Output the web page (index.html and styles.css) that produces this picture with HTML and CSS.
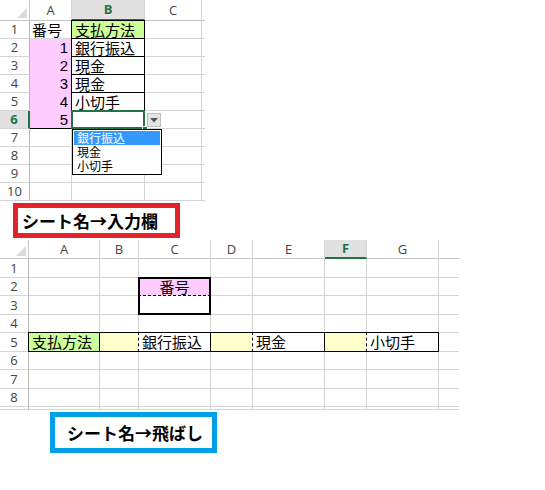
FILE: index.html
```html
<!DOCTYPE html>
<html lang="ja">
<head>
<meta charset="utf-8">
<title>シート</title>
<link rel="stylesheet" href="styles.css">
</head>
<body>
<main class="page">
  <section class="sheet sheet-top">
    <div class="h corner"><span class="tri"></span></div>
    <div class="h">A</div>
    <div class="h sel">B</div>
    <div class="h">C</div>
    <div class="h edge"></div>

    <div class="r">1</div>
    <div class="c">番号</div>
    <div class="c bx green">支払方法</div>
    <div class="c"></div>
    <div class="c edge"></div>

    <div class="r">2</div>
    <div class="c pk num">1</div>
    <div class="c bx">銀行振込</div>
    <div class="c"></div>
    <div class="c edge"></div>

    <div class="r">3</div>
    <div class="c pk num">2</div>
    <div class="c bx">現金</div>
    <div class="c"></div>
    <div class="c edge"></div>

    <div class="r">4</div>
    <div class="c pk num">3</div>
    <div class="c bx">現金</div>
    <div class="c"></div>
    <div class="c edge"></div>

    <div class="r">5</div>
    <div class="c pk num">4</div>
    <div class="c bx">小切手</div>
    <div class="c"></div>
    <div class="c edge"></div>

    <div class="r sel">6</div>
    <div class="c pk num last">5</div>
    <div class="c selcell">
      <span class="handle"></span>
      <span class="dd-btn"><svg width="8" height="5" viewBox="0 0 8 5"><path d="M0 0h8L4 4.5z" fill="#555"/></svg></span>
      <ul class="dd-list">
        <li class="hl">銀行振込</li>
        <li>現金</li>
        <li>小切手</li>
      </ul>
    </div>
    <div class="c"></div>
    <div class="c edge"></div>

    <div class="r">7</div><div class="c"></div><div class="c"></div><div class="c"></div><div class="c edge"></div>
    <div class="r">8</div><div class="c"></div><div class="c"></div><div class="c"></div><div class="c edge"></div>
    <div class="r">9</div><div class="c"></div><div class="c"></div><div class="c"></div><div class="c edge"></div>
    <div class="r">10</div><div class="c"></div><div class="c"></div><div class="c"></div><div class="c edge"></div>
  </section>

  <div class="label label-red">シート名→入力欄</div>

  <section class="sheet sheet-bottom">
    <div class="h corner"><span class="tri"></span></div>
    <div class="h">A</div>
    <div class="h">B</div>
    <div class="h">C</div>
    <div class="h">D</div>
    <div class="h">E</div>
    <div class="h sel">F</div>
    <div class="h">G</div>
    <div class="h edge"></div>

    <div class="r">1</div><div class="c"></div><div class="c"></div><div class="c"></div><div class="c"></div><div class="c"></div><div class="c"></div><div class="c"></div><div class="c edge"></div>

    <div class="r">2</div><div class="c"></div><div class="c"></div>
    <div class="c nbox-top">番号</div>
    <div class="c"></div><div class="c"></div><div class="c"></div><div class="c"></div><div class="c edge"></div>

    <div class="r">3</div><div class="c"></div><div class="c"></div>
    <div class="c nbox-bot"></div>
    <div class="c"></div><div class="c"></div><div class="c"></div><div class="c"></div><div class="c edge"></div>

    <div class="r">4</div><div class="c"></div><div class="c"></div><div class="c"></div><div class="c"></div><div class="c"></div><div class="c"></div><div class="c"></div><div class="c edge"></div>

    <div class="r">5</div>
    <div class="c b5 green">支払方法</div>
    <div class="c b5 yellow"></div>
    <div class="c b5 dl">銀行振込</div>
    <div class="c b5 yellow"></div>
    <div class="c b5 dl">現金</div>
    <div class="c b5 yellow"></div>
    <div class="c b5 dl">小切手</div>
    <div class="c edge"></div>

    <div class="r">6</div><div class="c"></div><div class="c"></div><div class="c"></div><div class="c"></div><div class="c"></div><div class="c"></div><div class="c"></div><div class="c edge"></div>
    <div class="r">7</div><div class="c"></div><div class="c"></div><div class="c"></div><div class="c"></div><div class="c"></div><div class="c"></div><div class="c"></div><div class="c edge"></div>
    <div class="r">8</div><div class="c"></div><div class="c"></div><div class="c"></div><div class="c"></div><div class="c"></div><div class="c"></div><div class="c"></div><div class="c edge"></div>
    <div class="r"></div><div class="c"></div><div class="c"></div><div class="c"></div><div class="c"></div><div class="c"></div><div class="c"></div><div class="c"></div><div class="c edge"></div>
  </section>

  <div class="label label-blue">シート名→飛ばし</div>
</main>
</body>
</html>
```

FILE: styles.css
```css
* {
  box-sizing: border-box;
  margin: 0;
  padding: 0;
}

html, body {
  background: #fff;
}

body {
  margin: 0;
  font-family: "Noto Sans CJK JP", "Noto Sans", sans-serif;
  color: #000;
}

.page {
  display: flex;
  flex-direction: column;
  align-items: flex-start;
}

.sheet {
  display: grid;
  overflow: hidden;
}

.sheet-top {
  grid-template-columns: 30px 42px 73px 57px 3px;
  grid-template-rows: 21px repeat(10, 18px);
  width: 205px;
}

.sheet-bottom {
  margin-top: 2px;
  grid-template-columns: 29px 71px 39px 72px 42px 72px 42px 72px 20px;
  grid-template-rows: 19px repeat(4, 19px 18px) 3px;
  width: 459px;
  height: 170px;
}

/* headers */
.h {
  display: flex;
  align-items: center;
  justify-content: center;
  border-right: 1px solid #d4d4d4;
  border-bottom: 1px solid #c4c4c4;
  font-family: "Open Sans", "Liberation Sans", sans-serif;
  font-size: 13px;
  color: #444;
  line-height: 1;
}

.h.edge {
  border-right: none;
}

.h.sel {
  background: #e1e1e1;
  color: #217346;
  font-weight: 700;
  border-bottom: 2px solid #217346;
}

.corner {
  align-items: flex-end;
  justify-content: flex-end;
  padding: 0 2px 2px 0;
  border-right-color: #c4c4c4;
}

.tri {
  display: block;
  width: 10px;
  height: 10px;
  background: #dadada;
  clip-path: polygon(100% 0, 100% 100%, 0 100%);
}

.r {
  display: flex;
  align-items: center;
  justify-content: center;
  border-right: 1px solid #b8b8b8;
  border-bottom: 1px solid #d4d4d4;
  font-family: "Open Sans", "Liberation Sans", sans-serif;
  font-size: 13px;
  color: #444;
  line-height: 1;
}

.r.sel {
  background: #e1e1e1;
  color: #217346;
  font-weight: 700;
  border-right: 2px solid #217346;
}

/* cells */
.c {
  display: flex;
  align-items: center;
  border-right: 1px solid #d4d4d4;
  border-bottom: 1px solid #d4d4d4;
  font-size: 15px;
  line-height: 16px;
  padding: 0 2px;
  white-space: nowrap;
}

.c.edge {
  border-right: none;
}

.num {
  justify-content: flex-end;
  padding-right: 3px;
  font-family: "Liberation Sans", sans-serif;
  font-size: 15px;
}

.pk {
  background: #ffccff;
  border-bottom-color: #ffccff;
}

.pk.last {
  border-bottom-color: #000;
}

.green {
  background: #ccff99;
}

.yellow {
  background: #ffffcc;
}

.bx {
  margin: -1px 0 0 -1px;
  border: 1px solid #000;
  padding-left: 3px;
}

.selcell {
  position: relative;
  margin: -1px 0 0 -1px;
  border: 2px solid #217346;
  background: #fff;
  z-index: 2;
}

.handle {
  position: absolute;
  right: -5px;
  bottom: -5px;
  width: 6px;
  height: 6px;
  background: #217346;
  border: 1px solid #fff;
}

.dd-btn {
  position: absolute;
  left: calc(100% + 4px);
  top: 1px;
  width: 14px;
  height: 14px;
  display: flex;
  align-items: center;
  justify-content: center;
  background: #e4e4e4;
  border: 1px solid #bdbdbd;
}

.dd-list {
  position: absolute;
  left: -1px;
  top: calc(100% + 2px);
  width: 90px;
  list-style: none;
  background: #fff;
  border: 1px solid #000;
  padding: 1px;
  z-index: 3;
}

.dd-list li {
  height: 14px;
  line-height: 14px;
  font-size: 12px;
  padding-left: 3px;
}

.dd-list .hl {
  background: #3399ff;
  color: #fff;
}

/* bottom sheet special cells */
.nbox-top {
  margin: -1px 0 0 -1px;
  border: 2px solid #000;
  border-bottom: 1px dashed #000;
  background: #ffccff;
  justify-content: center;
}

.nbox-bot {
  margin: 0 0 0 -1px;
  border: 2px solid #000;
  border-top: none;
  background: #fff;
}

.b5 {
  margin: -1px 0 0 -1px;
  border: 1px solid #000;
  padding-left: 3px;
  background-color: #fff;
}

.b5.green {
  background: #ccff99;
}

.b5.yellow {
  background: #ffffcc;
}

.b5.dl {
  border-left-style: dashed;
}

/* labels */
.label {
  width: 167px;
  font-family: "Noto Sans CJK JP", sans-serif;
  font-weight: 700;
  font-size: 17px;
  line-height: 1;
  display: flex;
  align-items: center;
  white-space: nowrap;
}

.label-red {
  margin: 2px 0 0 13px;
  height: 35px;
  border: 5px solid #e3222b;
  padding-left: 4px;
}

.label-blue {
  margin: 2px 0 0 50px;
  height: 41px;
  border: 5px solid #00a0e9;
  padding-left: 12px;
}
```
